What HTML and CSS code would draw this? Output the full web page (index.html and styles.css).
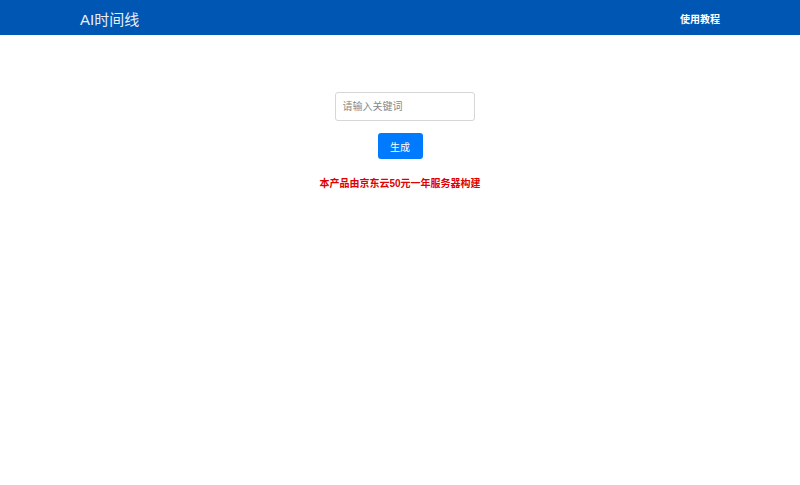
FILE: index.html
```html
<!DOCTYPE html>
<html lang="zh">
<head>
<meta charset="utf-8">
<title>AI时间线</title>
<link rel="stylesheet" href="styles.css">
</head>
<body>
<header class="navbar">
  <div class="brand">AI时间线</div>
  <a class="nav-link" href="#">使用教程</a>
</header>
<main class="main">
  <input class="keyword" type="text" placeholder="请输入关键词">
  <button class="btn">生成</button>
  <p class="notice">本产品由京东云50元一年服务器构建</p>
</main>
</body>
</html>
```
FILE: styles.css
```css
* { box-sizing: border-box; }
body {
  margin: 0;
  font-family: "Liberation Sans", "Noto Sans CJK SC", sans-serif;
  background: #fff;
}
.navbar {
  height: 35px;
  background: #0056b3;
  display: flex;
  align-items: center;
  justify-content: space-between;
  padding: 0 80px 0 80px;
}
.brand {
  color: #e8eef8;
  font-size: 15px;
  padding-top: 2px;
}
.nav-link {
  color: #fff;
  font-size: 10px;
  font-weight: bold;
  text-decoration: none;
  margin-top: 1px;
}
.main {
  display: flex;
  flex-direction: column;
  align-items: center;
  padding-top: 57px;
}
.keyword {
  width: 140px;
  height: 29px;
  border: 1px solid #d6d6d6;
  border-radius: 3px;
  padding: 0 7px;
  font-size: 10px;
  font-family: inherit;
  margin-left: 9px;
}
.keyword::placeholder { color: #888; }
.btn {
  margin-top: 12px;
  width: 45px;
  height: 26px;
  background: #007bff;
  color: #fff;
  border: none;
  border-radius: 3px;
  font-size: 10px;
  font-family: inherit;
  padding: 0;
}
.notice {
  margin: 16px 0 0 0;
  color: #e00000;
  font-size: 10px;
  font-weight: bold;
}
```
